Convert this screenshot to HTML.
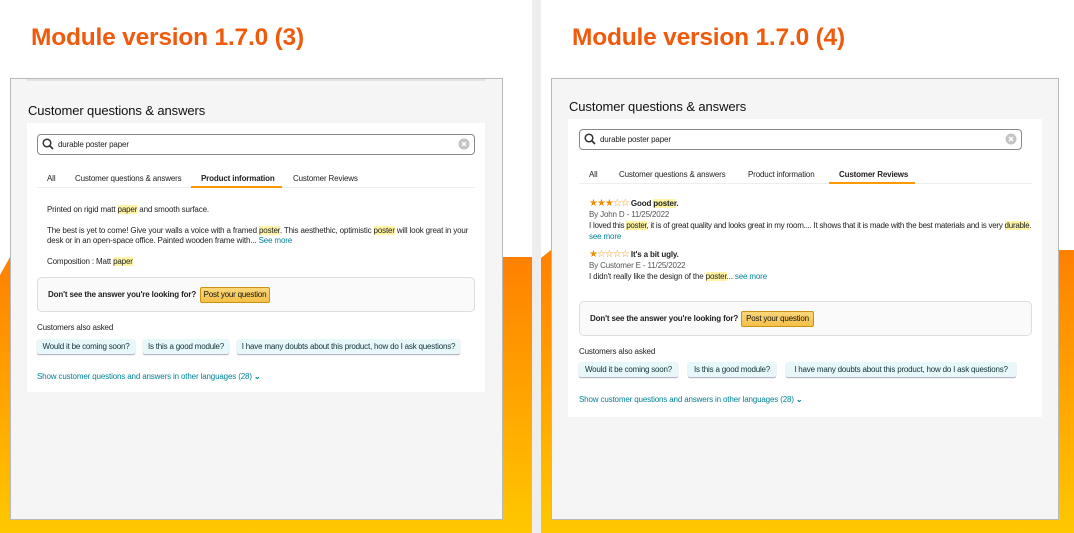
<!DOCTYPE html>
<html><head><meta charset="utf-8"><style>
*{margin:0;padding:0;box-sizing:border-box}
body{width:1074px;height:533px;position:relative;overflow:hidden;background:#fff;font-family:"Liberation Sans",sans-serif;color:#111}
.abs{position:absolute}
.bg{position:absolute;background:linear-gradient(#ff8000,#ffc800)}
h1{position:absolute;font-family:"Liberation Sans",sans-serif;font-weight:bold;color:#ef5a0c;font-size:24.5px;letter-spacing:-0.2px;top:24px}
.card{position:absolute;background:#f5f5f5;border:1px solid #b8b8b8;top:78px;height:442px}
.title{position:absolute;font-size:13px;color:#111;letter-spacing:-0.1px}
.inner{position:absolute;background:#fff}
.search{position:absolute;border:1.5px solid #888;border-radius:4px;height:21px;font-size:8px;color:#222;letter-spacing:-0.15px}
.search span{position:absolute;left:20px;top:5px}
.tabs{position:absolute;font-size:8px;color:#222;border-bottom:1px solid #eee;height:14px;letter-spacing:-0.15px}
.tabs span{position:absolute;top:0}
.ul{position:absolute;height:2px;background:#ff9900;bottom:-1px}
.t{position:absolute;font-size:8px;color:#222;white-space:nowrap;line-height:10px;letter-spacing:-0.15px}
.hl{background:#fff3a6}
.lk{color:#008296}
.box{position:absolute;border:1px solid #ddd;border-radius:5px;background:#fafafa}
.btn{position:absolute;background:linear-gradient(#fbd67a,#f5c04a);border:1px solid #c89411;border-radius:2px;font-size:8px;letter-spacing:-0.2px;height:16px;line-height:14px;text-align:center;white-space:nowrap}
.chip{position:absolute;background:#e8f8fa;box-shadow:0 1px 1px #aab;border-radius:2px;font-size:8px;letter-spacing:-0.2px;height:15px;line-height:15px;text-align:center;white-space:nowrap;color:#0f3138}
.star{color:#f08c00;font-size:10px;letter-spacing:-1px}
</style></head><body>
<div class="bg" style="left:0;top:257px;width:532px;height:276px;clip-path:polygon(0 18px,10px 0,100% 0,100% 100%,0 100%)"></div>
<div class="abs" style="left:532px;top:0;width:9px;height:533px;background:#eeeeee"></div>
<div class="bg" style="left:541px;top:250px;width:533px;height:283px;clip-path:polygon(0 8px,10px 0,100% 0,100% 100%,0 100%)"></div>

<h1 style="left:31px">Module version 1.7.0 (3)</h1>
<h1 style="left:572px">Module version 1.7.0 (4)</h1>

<!-- LEFT -->
<div class="card" style="left:10px;width:493px"></div>
<div class="abs" style="left:27px;top:79px;width:458px;height:2px;background:#e2e2e2"></div>
<div class="title" style="left:28px;top:103px">Customer questions &amp; answers</div>
<div class="inner" style="left:27px;top:123px;width:458px;height:269px"></div>
<div class="search" style="left:37px;top:134px;width:438px"><svg class="abs" style="left:4px;top:3px" width="12" height="12" viewBox="0 0 12 12"><circle cx="5" cy="5" r="3.8" fill="none" stroke="#333" stroke-width="1.5"/><path d="M8 8l3 3" stroke="#333" stroke-width="1.7"/></svg><span>durable poster paper</span><svg class="abs" style="right:4px;top:3px" width="12" height="12"><circle cx="6" cy="6" r="5.5" fill="#c4c4c4"/><path d="M4 4l4 4M8 4l-4 4" stroke="#fff" stroke-width="1.5"/></svg></div>
<div class="tabs" style="left:37px;top:174px;width:438px"><span style="left:10px">All</span><span style="left:38px">Customer questions &amp; answers</span><span style="left:164px;font-weight:bold">Product information</span><span style="left:256px">Customer Reviews</span><div class="ul" style="left:154px;width:91px"></div></div>
<div class="t" style="left:47px;top:205px">Printed on rigid matt <span class="hl">paper</span> and smooth surface.</div>
<div class="t" style="left:47px;top:226px">The best is yet to come! Give your walls a voice with a framed <span class="hl">poster</span>. This aesthethic, optimistic <span class="hl">poster</span> will look great in your</div>
<div class="t" style="left:47px;top:236px">desk or in an open-space office. Painted wooden frame with... <span class="lk">See more</span></div>
<div class="t" style="left:47px;top:257px">Composition : Matt <span class="hl">paper</span></div>
<div class="box" style="left:37px;top:277px;width:438px;height:35px"></div>
<div class="t" style="left:48px;top:290px;font-weight:bold">Don't see the answer you're looking for?</div>
<div class="btn" style="left:200px;top:287px;width:70px">Post your question</div>
<div class="t" style="left:37px;top:323px">Customers also asked</div>
<div class="chip" style="left:37px;top:339px;width:98px">Would it be coming soon?</div>
<div class="chip" style="left:143px;top:339px;width:86px">Is this a good module?</div>
<div class="chip" style="left:237px;top:339px;width:223px">I have many doubts about this product, how do I ask questions?</div>
<div class="t lk" style="left:37px;top:372px">Show customer questions and answers in other languages (28) <b>⌄</b></div>

<!-- RIGHT -->
<div class="card" style="left:551px;width:508px"></div>
<div class="title" style="left:569px;top:99px">Customer questions &amp; answers</div>
<div class="inner" style="left:568px;top:119px;width:474px;height:298px"></div>
<div class="search" style="left:579px;top:129px;width:443px"><svg class="abs" style="left:4px;top:3px" width="12" height="12" viewBox="0 0 12 12"><circle cx="5" cy="5" r="3.8" fill="none" stroke="#333" stroke-width="1.5"/><path d="M8 8l3 3" stroke="#333" stroke-width="1.7"/></svg><span>durable poster paper</span><svg class="abs" style="right:4px;top:3px" width="12" height="12"><circle cx="6" cy="6" r="5.5" fill="#c4c4c4"/><path d="M4 4l4 4M8 4l-4 4" stroke="#fff" stroke-width="1.5"/></svg></div>
<div class="tabs" style="left:579px;top:170px;width:453px"><span style="left:10px">All</span><span style="left:40px">Customer questions &amp; answers</span><span style="left:169px">Product information</span><span style="left:260px;font-weight:bold">Customer Reviews</span><div class="ul" style="left:250px;width:86px"></div></div>
<div class="t" style="left:589px;top:199px"><span class="star">★★★☆☆</span> <b>Good <span class="hl">poster</span>.</b></div>
<div class="t" style="left:589px;top:210px;color:#555">By John D - 11/25/2022</div>
<div class="t" style="left:589px;top:221px;letter-spacing:-0.25px">I loved this <span class="hl">poster</span>, it is of great quality and looks great in my room.... It shows that it is made with the best materials and is very <span class="hl">durable</span>.</div>
<div class="t lk" style="left:589px;top:232px">see more</div>
<div class="t" style="left:589px;top:250px"><span class="star">★☆☆☆☆</span> <b>It's a bit ugly.</b></div>
<div class="t" style="left:589px;top:261px;color:#555">By Customer E - 11/25/2022</div>
<div class="t" style="left:589px;top:272px">I didn't really like the design of the <span class="hl">poster</span>... <span class="lk">see more</span></div>
<div class="box" style="left:579px;top:301px;width:453px;height:35px"></div>
<div class="t" style="left:590px;top:314px;font-weight:bold">Don't see the answer you're looking for?</div>
<div class="btn" style="left:741px;top:311px;width:73px">Post your question</div>
<div class="t" style="left:579px;top:347px">Customers also asked</div>
<div class="chip" style="left:579px;top:362px;width:99px">Would it be coming soon?</div>
<div class="chip" style="left:688px;top:362px;width:88px">Is this a good module?</div>
<div class="chip" style="left:786px;top:362px;width:230px">I have many doubts about this product, how do I ask questions?</div>
<div class="t lk" style="left:579px;top:395px">Show customer questions and answers in other languages (28) <b>⌄</b></div>
</body></html>
